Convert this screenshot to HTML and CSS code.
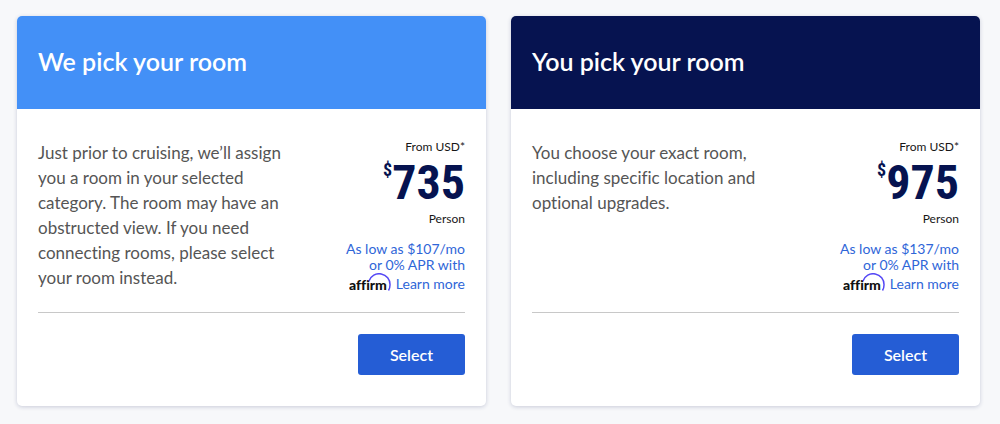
FILE: index.html
```
<!DOCTYPE html>
<html lang="en">
<head>
  <meta charset="UTF-8" />
  <meta name="viewport" content="width=device-width, initial-scale=1.0"/>
  <title>Choose your room</title>
  <link rel="stylesheet" href="styles.css">
</head>
<body>
  <main class="options">
    <section class="card">
      <h2 class="card-header">We pick your room</h2>
      <div class="card-body">
        <div class="details">
          <p class="description">Just prior to cruising, we’ll assign you a room in your selected category. The room may have an obstructed view. If you need connecting rooms, please select your room instead.</p>
          <div class="pricing">
            <div class="label">From USD*</div>
            <div class="price"><span class="currency">$</span><span class="amount">735</span></div>
            <div class="label">Person</div>
            <div class="financing">
              As low as $107/mo<br>or 0% APR with
              <div class="affirm-row">
                <svg class="affirm" width="43" height="22" viewBox="0 0 43 22" role="img" aria-label="affirm">
                  <text x="0" y="17">affirm</text>
                  <path d="M20 8 A10.8 10.8 0 0 1 41 12 C41 14 40.5 16 39.5 17.5" />
                </svg>
                <a href="#">Learn more</a>
              </div>
            </div>
          </div>
        </div>
        <div class="actions">
          <button type="button">Select</button>
        </div>
      </div>
    </section>

    <section class="card">
      <h2 class="card-header dark">You pick your room</h2>
      <div class="card-body">
        <div class="details">
          <p class="description">You choose your exact room, including specific location and optional upgrades.</p>
          <div class="pricing">
            <div class="label">From USD*</div>
            <div class="price"><span class="currency">$</span><span class="amount">975</span></div>
            <div class="label">Person</div>
            <div class="financing">
              As low as $137/mo<br>or 0% APR with
              <div class="affirm-row">
                <svg class="affirm" width="43" height="22" viewBox="0 0 43 22" role="img" aria-label="affirm">
                  <text x="0" y="17">affirm</text>
                  <path d="M20 8 A10.8 10.8 0 0 1 41 12 C41 14 40.5 16 39.5 17.5" />
                </svg>
                <a href="#">Learn more</a>
              </div>
            </div>
          </div>
        </div>
        <div class="actions">
          <button type="button">Select</button>
        </div>
      </div>
    </section>
  </main>
</body>
</html>
```
FILE: styles.css
```
body { font-family: Lato, sans-serif; font-variant-ligatures: none; background: #f7f8fa; color: #171717; margin: 0; }
.options { display: grid; grid-template-columns: 1fr 1fr; gap: 25px; padding: 16px 20px 18px 17px; }
.card { background: white; border-radius: 5px; overflow: hidden; box-shadow: 0 1px 4px rgba(20, 30, 90, 0.2); }
.card-header { margin: 0; padding: 29px 21px 31px; font-size: 25px; line-height: 33px; font-weight: 600; color: white; background: #4390f7; }
.card-header.dark { background: #061350; }
.card-body { padding: 30px 21px 31px; }
.details { display: flex; justify-content: space-between; align-items: flex-start; padding-bottom: 17px; border-bottom: 1px solid #c8c8c8; }
.description { flex: 0 1 250px; margin: 1px 0 0; font-size: 17px; line-height: 25px; color: #555; }
.pricing { text-align: right; white-space: nowrap; }
.label { font-size: 12px; line-height: 15px; }
.price { display: flex; justify-content: flex-end; align-items: flex-start; height: 57px; font-family: "Roboto Condensed", Roboto, sans-serif; font-weight: 700; color: #061350; }
.currency { margin-top: 3px; font-size: 18px; line-height: 25px; }
.amount { font-size: 48px; line-height: 57px; }
.financing { margin-top: 15px; font-size: 14px; line-height: 16px; color: #2f66d8; }
.affirm-row { display: flex; justify-content: flex-end; align-items: center; gap: 4px; }
.affirm-row a { line-height: 22px; color: inherit; text-decoration: none; }
.affirm text { font-family: Lato, sans-serif; font-size: 14px; font-weight: 900; fill: #111; }
.affirm path { fill: none; stroke: #5548f5; stroke-width: 1.5; }
.actions { display: flex; justify-content: flex-end; padding-top: 21px; }
button { padding: 10px 32px; font-family: inherit; font-size: 16px; line-height: 21px; font-weight: 600; background: #255dd5; color: white; border: none; border-radius: 3px; cursor: pointer; }
```
